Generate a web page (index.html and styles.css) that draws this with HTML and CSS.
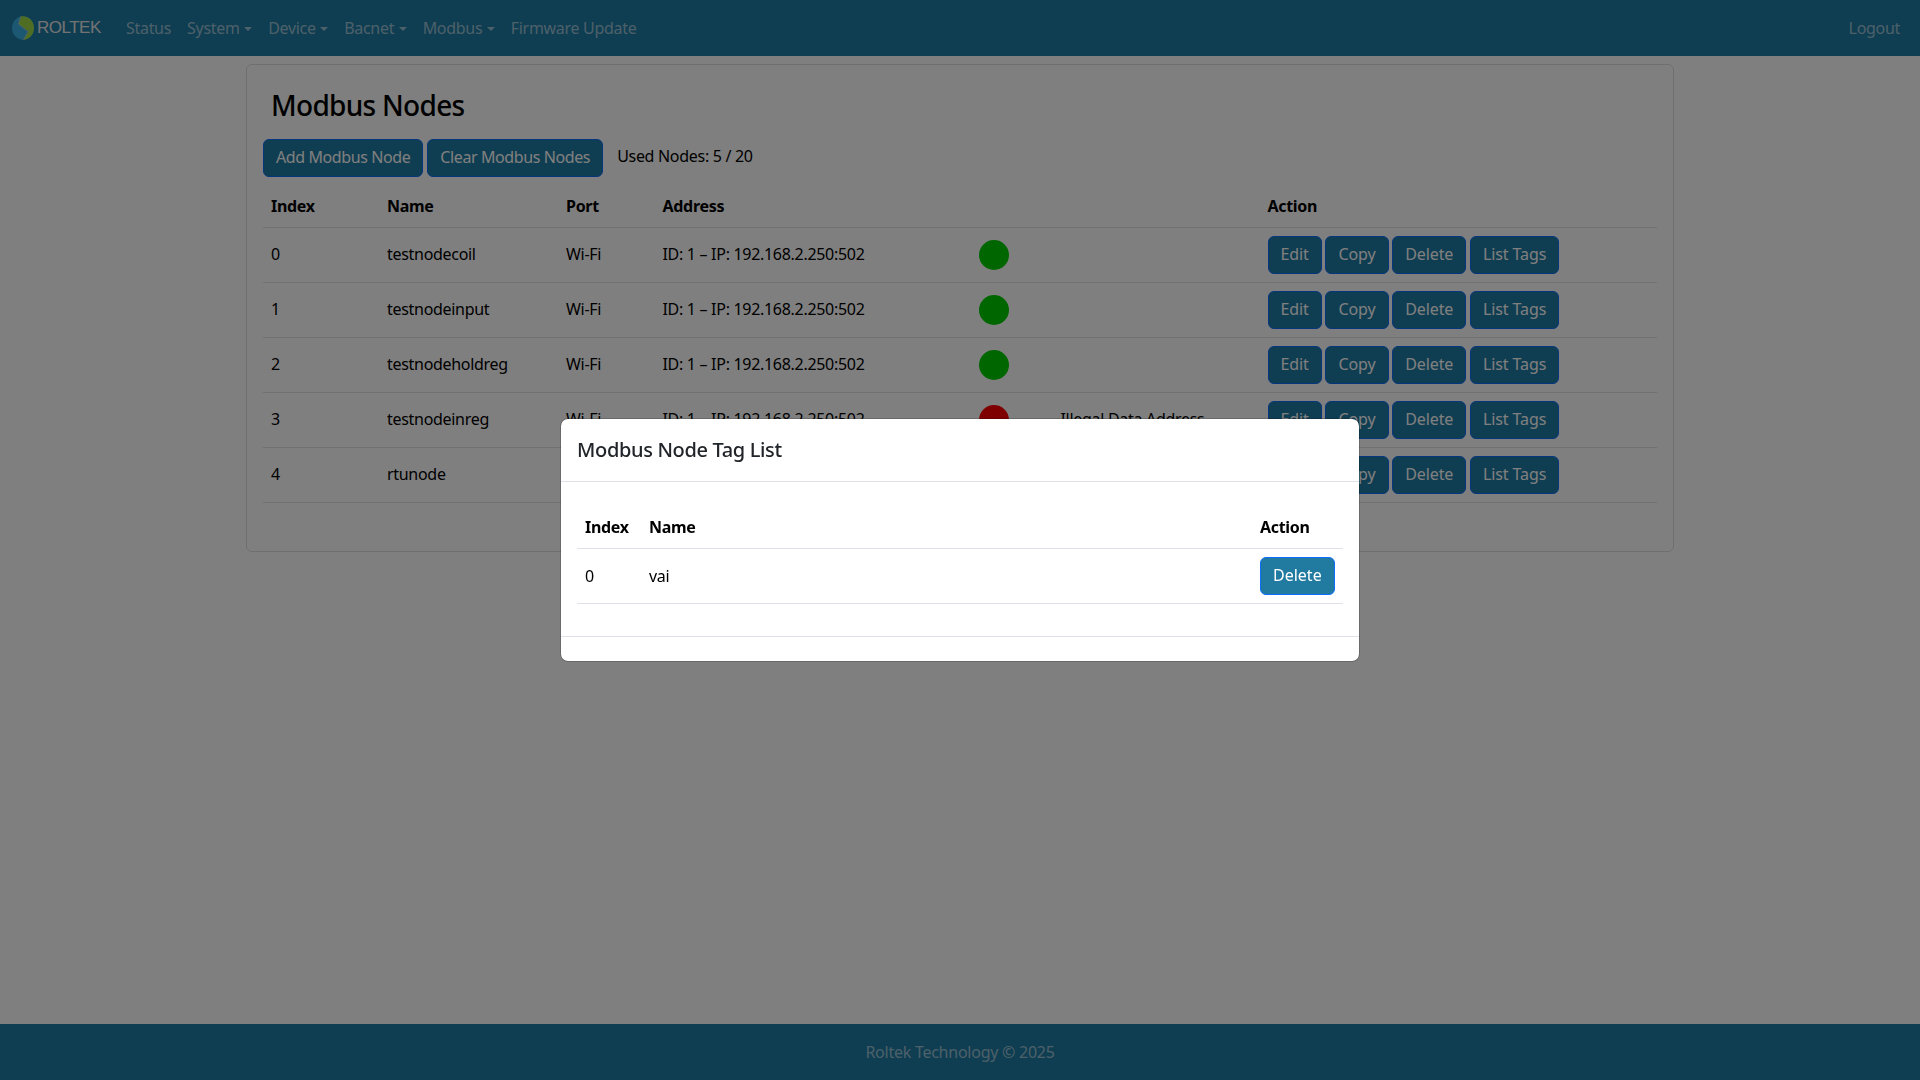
FILE: index.html
```html
<!DOCTYPE html>
<html lang="en">
<head>
<meta charset="utf-8">
<title>Modbus Nodes</title>
<link rel="stylesheet" href="styles.css">
</head>
<body>
<nav class="navbar">
  <a class="brand" href="#">
    <svg class="brand-mark" viewBox="0 0 22 24" aria-hidden="true">
      <ellipse cx="11" cy="12" rx="11" ry="11.800" fill="#3ab0e6"/>
      <path d="M8.800.4C16.500-.6 22 5 22 12c0 6.600-4.800 11.600-10.500 11.800L16.200 15.600 6.500 8Z" fill="#a0dc46"/>
      <path d="M8.800.4 6.500 8 16.200 15.600 11.500 23.800" fill="none" stroke="#9fc4c8" stroke-width=".9"/>
    </svg>
    <span class="brand-text">ROLTEK</span>
  </a>
  <ul class="nav-list">
    <li><a class="nav-link" href="#">Status</a></li>
    <li><a class="nav-link caret" href="#">System</a></li>
    <li><a class="nav-link caret" href="#">Device</a></li>
    <li><a class="nav-link caret" href="#">Bacnet</a></li>
    <li><a class="nav-link caret" href="#">Modbus</a></li>
    <li><a class="nav-link" href="#">Firmware Update</a></li>
  </ul>
  <a class="nav-link logout" href="#">Logout</a>
</nav>

<main class="page">
  <section class="card">
    <h2 class="card-title">Modbus Nodes</h2>
    <div class="toolbar">
      <button class="btn">Add Modbus Node</button>
      <button class="btn">Clear Modbus Nodes</button>
      <span class="used">Used Nodes: 5 / 20</span>
    </div>
    <table class="table nodes">
      <colgroup>
        <col class="c-index"><col class="c-name"><col class="c-port"><col class="c-addr"><col class="c-dot"><col class="c-msg"><col>
      </colgroup>
      <thead>
        <tr><th>Index</th><th>Name</th><th>Port</th><th>Address</th><th></th><th></th><th>Action</th></tr>
      </thead>
      <tbody>
        <tr><td>0</td><td>testnodecoil</td><td>Wi-Fi</td><td>ID: 1 – IP: 192.168.2.250:502</td><td><span class="dot ok"></span></td><td></td>
          <td><div class="actions"><button class="btn">Edit</button><button class="btn">Copy</button><button class="btn">Delete</button><button class="btn">List Tags</button></div></td></tr>
        <tr><td>1</td><td>testnodeinput</td><td>Wi-Fi</td><td>ID: 1 – IP: 192.168.2.250:502</td><td><span class="dot ok"></span></td><td></td>
          <td><div class="actions"><button class="btn">Edit</button><button class="btn">Copy</button><button class="btn">Delete</button><button class="btn">List Tags</button></div></td></tr>
        <tr><td>2</td><td>testnodeholdreg</td><td>Wi-Fi</td><td>ID: 1 – IP: 192.168.2.250:502</td><td><span class="dot ok"></span></td><td></td>
          <td><div class="actions"><button class="btn">Edit</button><button class="btn">Copy</button><button class="btn">Delete</button><button class="btn">List Tags</button></div></td></tr>
        <tr><td>3</td><td>testnodeinreg</td><td>Wi-Fi</td><td>ID: 1 – IP: 192.168.2.250:502</td><td><span class="dot bad"></span></td><td>Illegal Data Address</td>
          <td><div class="actions"><button class="btn">Edit</button><button class="btn">Copy</button><button class="btn">Delete</button><button class="btn">List Tags</button></div></td></tr>
        <tr><td>4</td><td>rtunode</td><td>RS485</td><td>ID: 1</td><td><span class="dot ok"></span></td><td></td>
          <td><div class="actions"><button class="btn">Edit</button><button class="btn">Copy</button><button class="btn">Delete</button><button class="btn">List Tags</button></div></td></tr>
      </tbody>
    </table>
  </section>
</main>

<footer class="footer">Roltek Technology © 2025</footer>

<div class="backdrop">
  <div class="modal">
    <header class="modal-header"><h5 class="modal-title">Modbus Node Tag List</h5></header>
    <div class="modal-body">
      <table class="table tags">
        <colgroup><col class="m-index"><col><col class="m-action"></colgroup>
        <thead><tr><th>Index</th><th>Name</th><th>Action</th></tr></thead>
        <tbody><tr><td>0</td><td>vai</td><td><button class="btn btn-live">Delete</button></td></tr></tbody>
      </table>
    </div>
    <div class="modal-footer"></div>
  </div>
</div>
</body>
</html>
```
FILE: styles.css
```css
* { box-sizing: border-box; }
html, body { height: 100%; }
body {
  margin: 0;
  min-height: 100vh;
  display: flex;
  flex-direction: column;
  background: #fff;
  color: #212529;
  font-family: "Noto Sans", sans-serif;
  font-size: 16px;
  line-height: 24px;
  letter-spacing: -.3px;
}
a { text-decoration: none; }

.navbar {
  height: 56px;
  flex: none;
  display: flex;
  align-items: center;
  padding: 0 12px;
  background: #1f7aa3;
}
.brand { display: flex; align-items: center; gap: 3px; width: 106px; }
.brand-mark { width: 22px; height: 24px; flex: none; }
.brand-text {
  font-family: "Liberation Sans", sans-serif;
  font-size: 17px;
  letter-spacing: -.5px;
  color: #e6e6e6;
}
.nav-list { display: flex; list-style: none; margin: 0; padding: 0; flex: 1; }
.nav-link { display: block; padding: 8px; color: rgba(255,255,255,.55); }
.nav-link.caret::after {
  content: "";
  display: inline-block;
  margin-left: 4.500px;
  vertical-align: 3px;
  border-top: 4px solid;
  border-left: 4px solid transparent;
  border-right: 4px solid transparent;
}

.page { flex: 1; padding: 8px 246px 0; }
.card {
  border: 1px solid rgba(0,0,0,.125);
  border-radius: 6px;
  padding: 16px;
  height: 488px;
}
.card-title {
  margin: 0 0 8px;
  padding: 7px 8px 9px;
  font-size: 28px;
  line-height: 34px;
  font-weight: 500;
  letter-spacing: -.7px;
  color: #000;
}
.toolbar { display: flex; align-items: center; gap: 4px; margin-bottom: 10px; letter-spacing: -.4px; }
.used { margin-left: 10px; padding-bottom: 4px; color: #000; letter-spacing: -.3px; }

.btn {
  font: inherit;
  letter-spacing: inherit;
  height: 38px;
  padding: 0 12px 2px;
  color: #fff;
  background: #1f7aa3;
  border: 1px solid #0d6efd;
  border-radius: 6px;
  white-space: nowrap;
}
.btn-live { background: #217aa0; letter-spacing: 0; }

.table { width: 100%; border-collapse: collapse; table-layout: fixed; color: #000; }
.table th, .table td {
  padding: 7px 8px 9px;
  text-align: left;
  vertical-align: middle;
  border-bottom: 1px solid #dee2e6;
}
.table th { font-weight: 700; }
.nodes td { height: 55px; }
.nodes td:nth-child(5), .nodes td:last-child { padding-top: 8px; padding-bottom: 8px; }

.c-index { width: 116px; }
.c-name { width: 179px; }
.c-port { width: 96.500px; }
.c-addr { width: 316.500px; }
.c-dot { width: 81.500px; }
.c-msg { width: 207px; }

.dot { display: block; width: 30px; height: 30px; border-radius: 50%; }
.dot.ok { background: #0c0; }
.dot.bad { background: #f00; }
.actions { display: flex; gap: 3.700px; letter-spacing: -.1px; }

.footer {
  height: 56px;
  flex: none;
  display: flex;
  align-items: center;
  justify-content: center;
  background: #1f7aa3;
  color: rgba(255,255,255,.55);
  letter-spacing: -.25px;
}

.backdrop {
  position: fixed;
  inset: 0;
  display: flex;
  align-items: center;
  justify-content: center;
  background: rgba(0,0,0,.5);
}
.modal {
  width: 800px;
  background: #fff;
  background-clip: padding-box;
  border: 1px solid rgba(0,0,0,.175);
  border-radius: 8px;
}
.modal-header { padding: 16px; border-bottom: 1px solid #dee2e6; height: 63px; }
.modal-title { margin: 0; font-size: 20px; line-height: 30px; font-weight: 500; letter-spacing: -.35px; }
.modal-body { padding: 26px 16px 16px; }
.tags { margin-bottom: 16px; }
.tags td { height: 55px; padding-top: 8px; padding-bottom: 8px; }
.m-index { width: 64px; }
.m-action { width: 91px; }
.modal-footer { height: 25px; border-top: 1px solid #dee2e6; }
```
